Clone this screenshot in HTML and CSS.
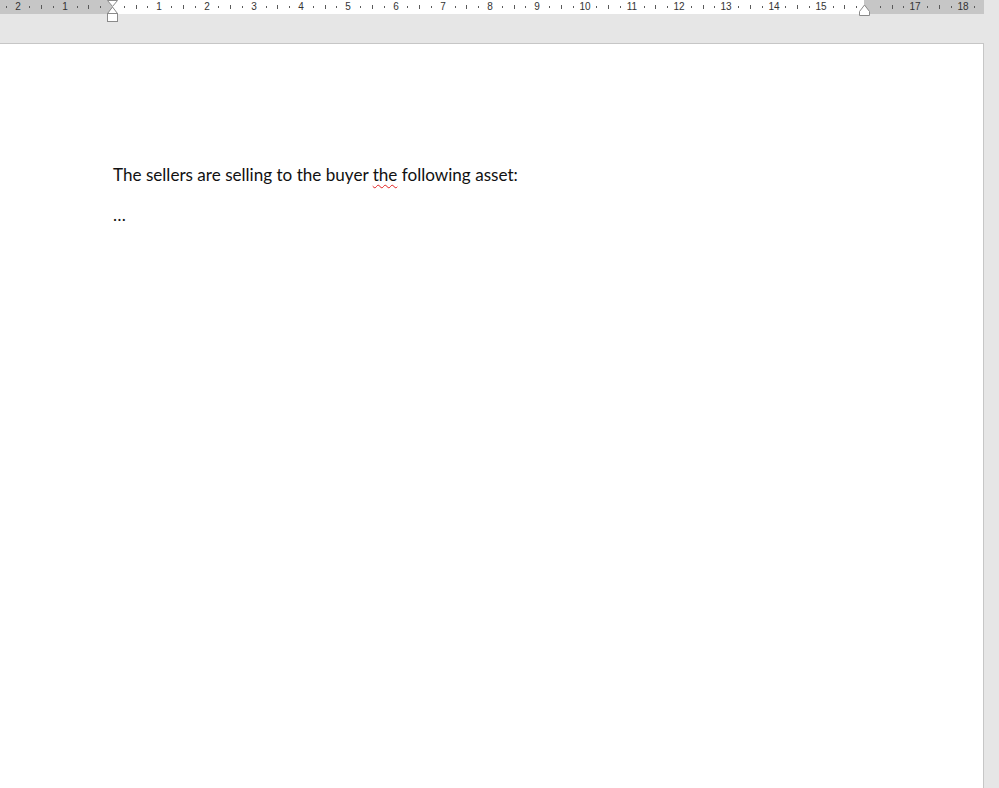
FILE: index.html
```html
<!DOCTYPE html>
<html>
<head>
<meta charset="utf-8">
<link rel="stylesheet" href="styles.css">
</head>
<body>
<div class="ruler-bar">
  <div class="ruler" id="ruler">
    <div class="ruler-left"></div>
    <div class="ruler-mid"></div>
    <div class="ruler-right"></div>
    <svg class="marker-left" width="13" height="23" viewBox="0 0 13 23">
      <path d="M1.5 0.5 L11.5 0.5 L6.5 6.5 Z" fill="#fff" stroke="#8a8a8a" stroke-width="1"/>
      <path d="M6.5 7 L11.5 13.5 L1.5 13.5 Z" fill="#fff" stroke="#8a8a8a" stroke-width="1"/>
      <rect x="1.5" y="13.5" width="10" height="8" fill="#fff" stroke="#8a8a8a" stroke-width="1"/>
    </svg>
    <svg class="marker-right" width="13" height="16" viewBox="0 0 13 16">
      <path d="M6.5 5 L11.5 11.5 L11.5 15.5 L1.5 15.5 L1.5 11.5 Z" fill="#fff" stroke="#8a8a8a" stroke-width="1"/>
    </svg>
  </div>
</div>
<div class="gap"></div>
<div class="page">
  <p class="line">The sellers are selling to the buyer <span class="spell">the</span> following asset:</p>
  <p class="line">…</p>
</div>
<script src="script.js"></script>
</body>
</html>
```
FILE: styles.css
```css
html, body {
  margin: 0;
  padding: 0;
  background: #e6e6e6;
  overflow: hidden;
  height: 788px;
}
.ruler-bar {
  height: 14px;
  width: 984px;
}
.ruler {
  position: relative;
  height: 14px;
  display: flex;
  font-family: "Liberation Sans", Arial, sans-serif;
}
.ruler-left {
  width: 112px;
  background: #c6c6c6;
}
.ruler-mid {
  width: 752px;
  background: #ffffff;
}
.ruler-right {
  flex: 1;
  background: #c6c6c6;
}
.tick-num {
  position: absolute;
  top: 1px;
  font-size: 10px;
  line-height: 12px;
  color: #333;
  transform: translateX(-50%);
}
.tick-dot {
  position: absolute;
  top: 6px;
  width: 1px;
  height: 2px;
  background: #5a5a5a;
}
.tick-half {
  position: absolute;
  top: 5px;
  width: 1px;
  height: 4px;
  background: #5a5a5a;
}
.marker-left {
  position: absolute;
  left: 106px;
  top: 0;
}
.marker-right {
  position: absolute;
  left: 858px;
  top: 0;
}
.gap {
  height: 29px;
}
.page {
  width: 984px;
  height: 745px;
  box-sizing: border-box;
  background: #fff;
  border-top: 1px solid #c6c6c6;
  border-right: 1px solid #c6c6c6;
  padding: 119px 0 0 113px;
  font-family: "Lato", "Open Sans", sans-serif;
  font-size: 17.1px;
  color: #111;
}
.line {
  margin: 0 0 16px 0;
  line-height: 24px;
}
.spell {
  text-decoration: underline wavy #e02020;
  text-decoration-thickness: 1px;
  text-underline-offset: 3px;
  text-decoration-skip-ink: none;
}
```
FILE: script.js
```js
(function () {
  var ruler = document.getElementById('ruler');
  var zero = 112, cm = 47.25;
  function add(cls, x, text) {
    var el = document.createElement('div');
    el.className = cls;
    el.style.left = Math.round(x) + 'px';
    if (text) el.textContent = text;
    ruler.insertBefore(el, ruler.querySelector('.marker-left'));
  }
  for (var n = -3; n <= 19; n++) {
    var x = zero + n * cm;
    if (n !== 0 && n !== 16 && x > 5 && x < 980) add('tick-num', x, String(Math.abs(n)));
    [0.25, 0.5, 0.75].forEach(function (f) {
      var xx = zero + (n + f) * cm;
      if (xx > 0 && xx < 983) add(f === 0.5 ? 'tick-half' : 'tick-dot', xx);
    });
  }
})();
```
